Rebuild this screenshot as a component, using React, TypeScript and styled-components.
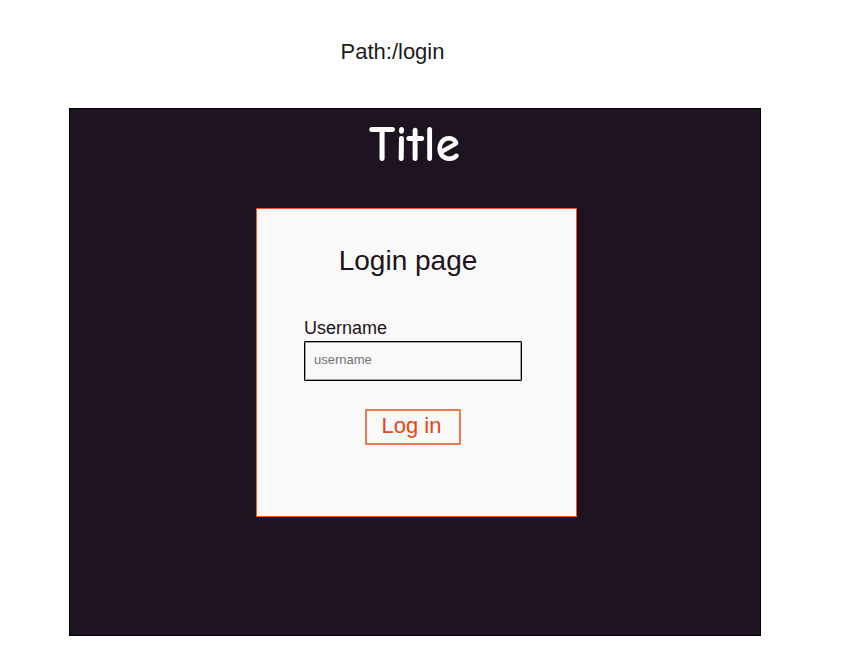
import React from "react";
import styled, { createGlobalStyle } from "styled-components";

const GlobalStyle = createGlobalStyle`
  * { box-sizing: border-box; }
  body {
    margin: 0;
    background: #ffffff;
    color: #1e1320;
    font-family: "Liberation Sans", Arial, sans-serif;
  }
`;

const Page = styled.div`
  padding: 40px 96px 23px 69px;
`;

const PathLabel = styled.p`
  margin: 0 0 44px;
  padding-right: 45px;
  font-size: 22px;
  line-height: 24px;
  text-align: center;
  color: #1c1c1c;
`;

const Screen = styled.main`
  display: flex;
  flex-direction: column;
  align-items: center;
  padding: 12px 16px 118px 19px;
  border: 1px solid #000000;
  background: #1e1320;
`;

const Title = styled.h1`
  margin: 0 0 39px;
  padding-right: 4px;
  font-family: Virgil, Excalifont, "Comic Sans MS", "Comic Neue", cursive;
  font-size: 50px;
  font-weight: 700;
  line-height: 48px;
  color: #ffffff;
`;

const Card = styled.form`
  display: flex;
  flex-direction: column;
  width: 100%;
  max-width: 321px;
  padding: 36px 54px 71px 47px;
  border: 1px solid #ea5b28;
  background: #f9f9f9;
`;

const Heading = styled.h2`
  margin: 0 0 41px;
  padding-right: 10px;
  font-size: 28px;
  font-weight: 400;
  line-height: 32px;
  text-align: center;
`;

const Label = styled.label`
  margin-bottom: 3px;
  font-size: 18px;
  line-height: 20px;
`;

const TextInput = styled.input`
  width: 100%;
  height: 40px;
  margin-bottom: 28px;
  padding: 0 9px 3px;
  border: 1px solid #000000;
  border-radius: 1px;
  outline: 1px solid #00000055;
  outline-offset: -2px;
  background: transparent;
  color: #1e1320;
  font: 13px "Liberation Sans", Arial, sans-serif;

  &::placeholder {
    color: #72727a;
    opacity: 1;
  }
`;

const SubmitButton = styled.button`
  align-self: center;
  height: 36px;
  padding: 0 18px 3px 15px;
  border: 2px solid #f07a50;
  border-radius: 1px;
  background: transparent;
  color: #e8470f;
  font: 22px "Liberation Sans", Arial, sans-serif;
  cursor: pointer;
`;

export default function App() {
  return (
    <>
      <GlobalStyle />
      <Page>
        <PathLabel>Path:/login</PathLabel>
        <Screen>
          <Title>Title</Title>
          <Card onSubmit={(event: React.FormEvent) => event.preventDefault()}>
            <Heading>Login page</Heading>
            <Label htmlFor="username">Username</Label>
            <TextInput id="username" name="username" type="text" placeholder="username" />
            <SubmitButton type="submit">Log in</SubmitButton>
          </Card>
        </Screen>
      </Page>
    </>
  );
}
